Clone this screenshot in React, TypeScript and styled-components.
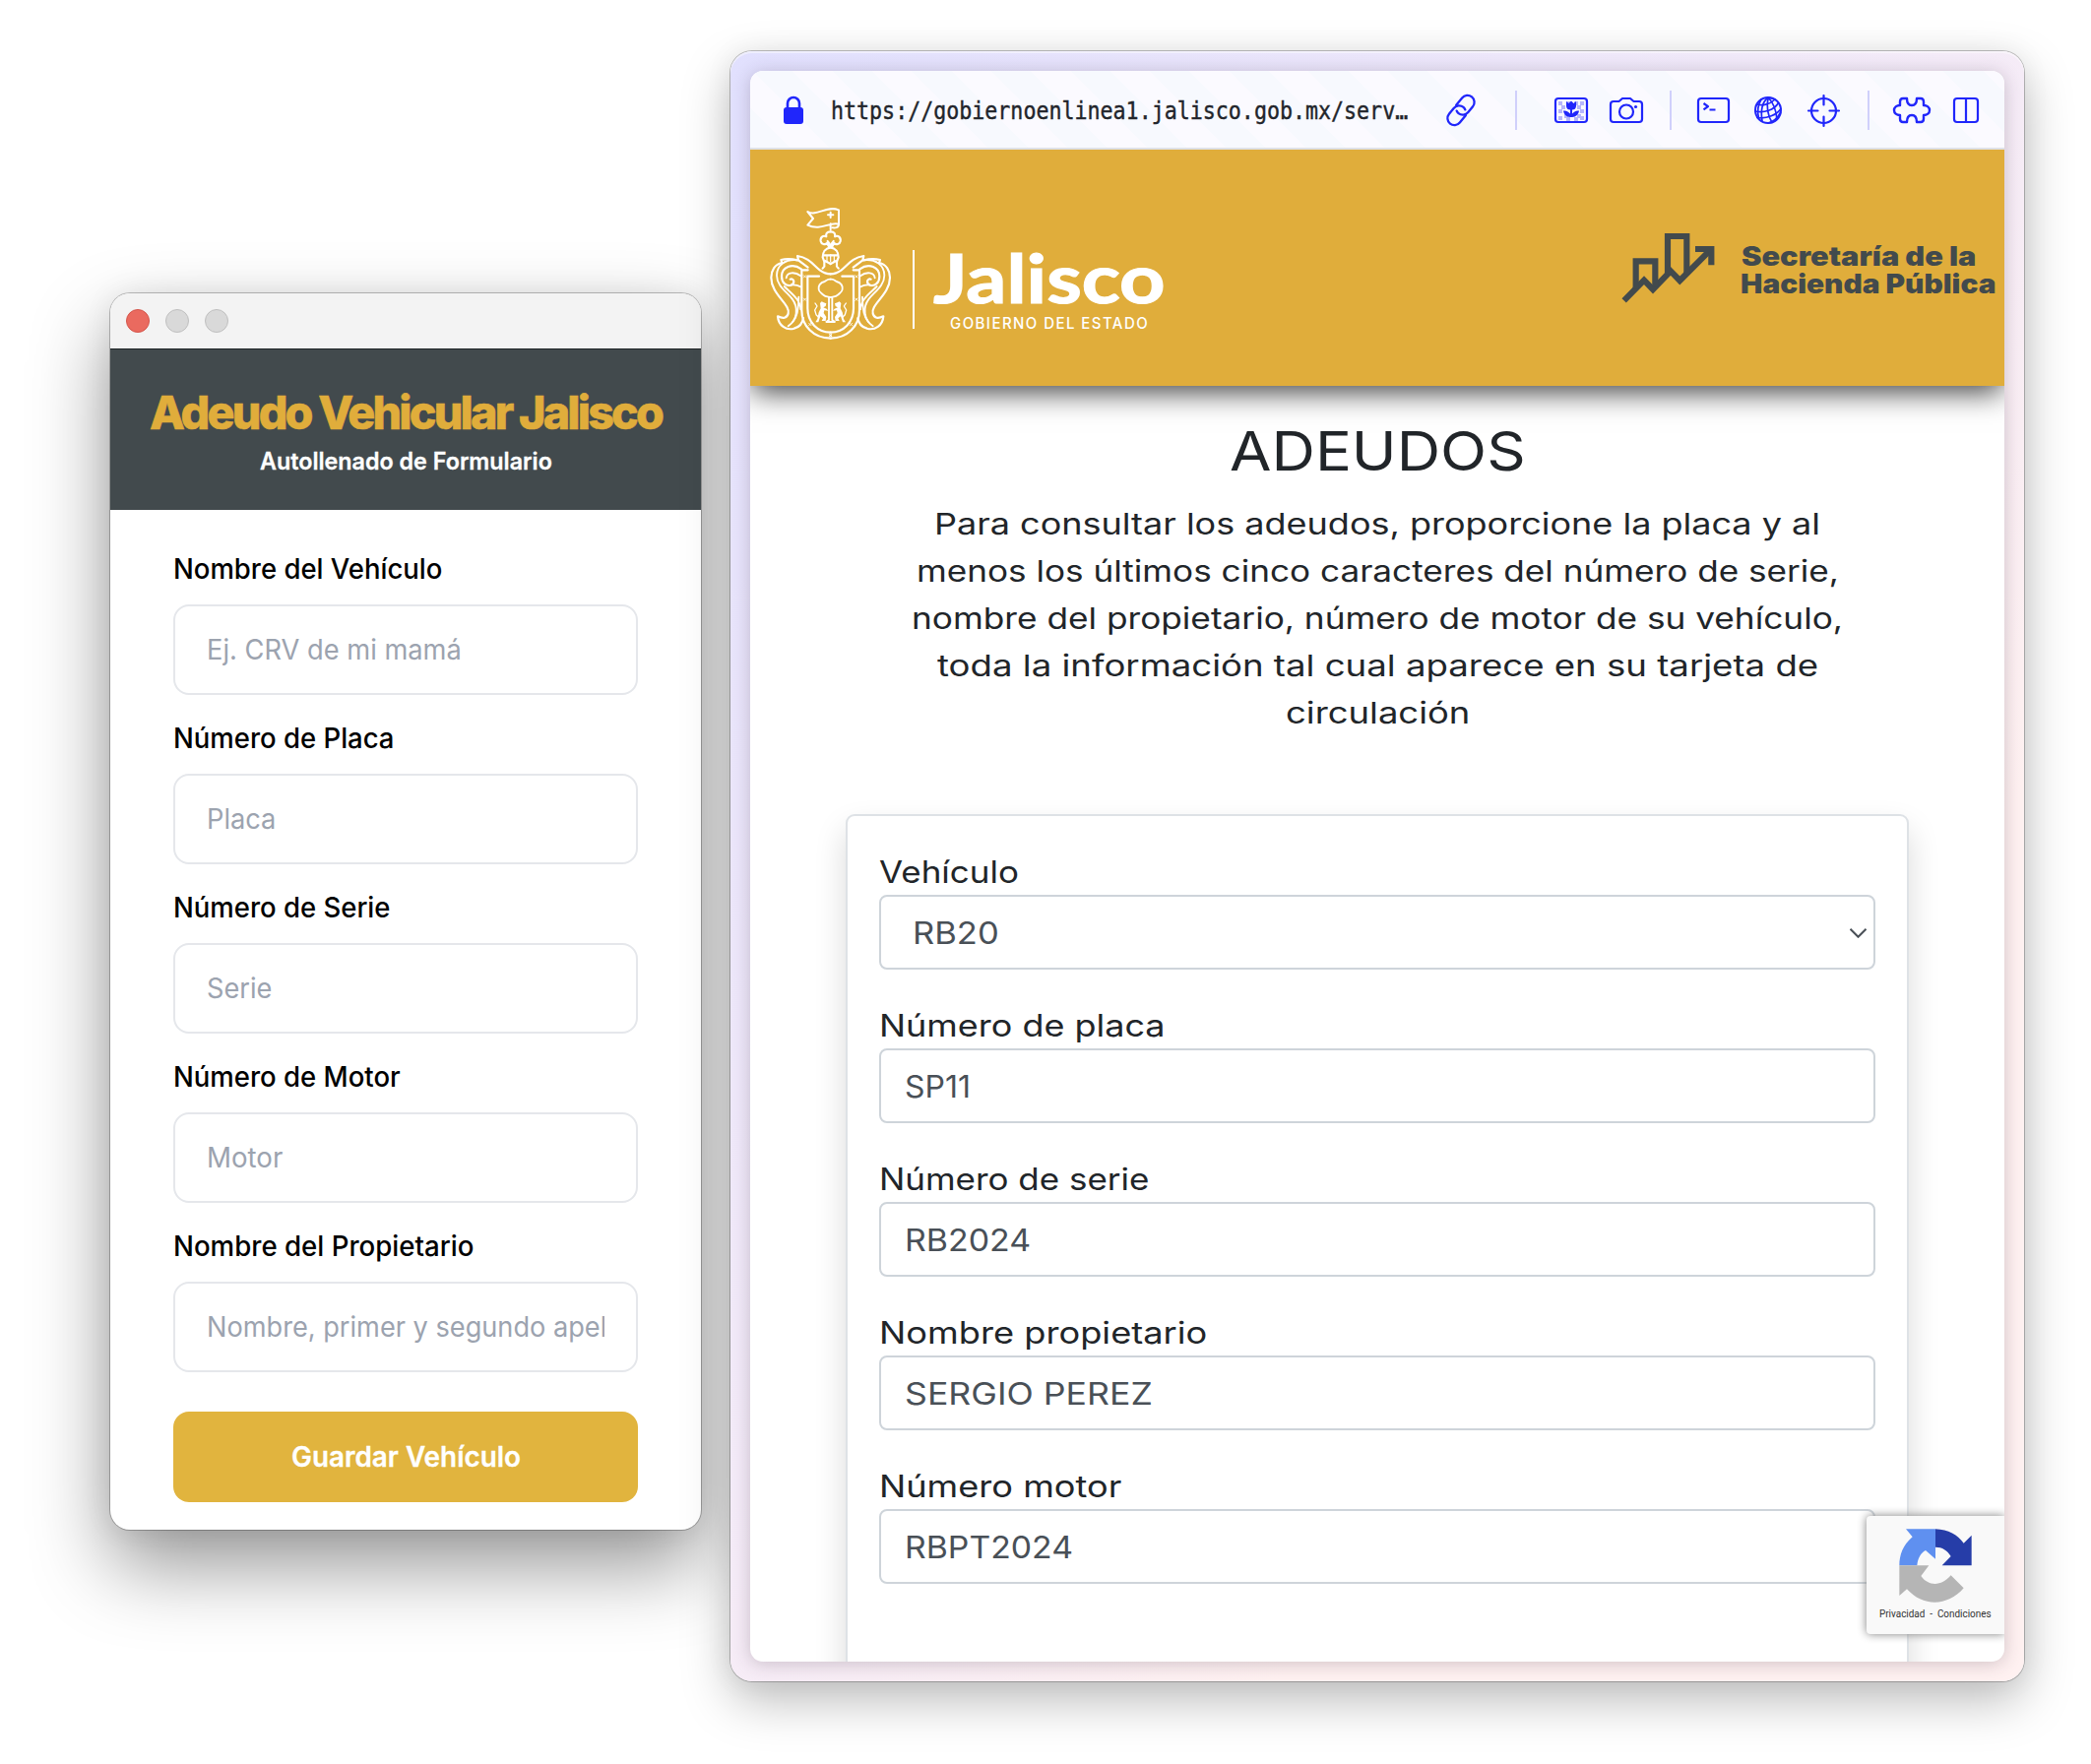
import React, { useLayoutEffect, useRef, useState } from 'react';
import styled, { createGlobalStyle } from 'styled-components';

const GlobalStyle = createGlobalStyle`
  * { box-sizing: border-box; }
  body { margin: 0; background: #fff; }
`;

const sans = `Inter, "Liberation Sans", sans-serif`;
const gold = '#e0ad3b';
const slate = '#424a4d';
const blue = '#2026fb';

/* ---------- text stretched to a given width ---------- */

const FitBox = styled.span<{ $w: number; $shift: number }>`
  display: inline-block;
  width: ${(p) => p.$w}px;
  margin-left: ${(p) => p.$shift}px;
  white-space: nowrap;
  text-align: left;
  vertical-align: top;
`;

const FitInner = styled.span`
  display: inline-block;
  transform-origin: 0 50%;
  vertical-align: top;
`;

function Fit({ w, shift = 0, children }: { w: number; shift?: number; children: string }) {
  const ref = useRef<HTMLSpanElement>(null);
  const [scale, setScale] = useState(1);
  useLayoutEffect(() => {
    if (ref.current) setScale(w / ref.current.offsetWidth);
  }, [w, children]);
  return (
    <FitBox $w={w} $shift={shift}>
      <FitInner ref={ref} style={{ transform: `scaleX(${scale})` }}>
        {children}
      </FitInner>
    </FitBox>
  );
}

/* ---------- desktop and windows ---------- */

const Desktop = styled.main`
  position: relative;
  width: 2124px;
  height: 1792px;
  overflow: hidden;
  background: #fff;
  font-family: ${sans};
`;

const AppWindow = styled.section`
  position: absolute;
  left: 112px;
  top: 298px;
  width: 600px;
  height: 1256px;
  display: flex;
  flex-direction: column;
  border-radius: 20px;
  background: #fff;
  overflow: hidden;
  box-shadow: 0 0 0 1px rgba(0, 0, 0, 0.24), 0 36px 80px rgba(0, 0, 0, 0.42), 0 0 30px rgba(0, 0, 0, 0.07);
`;

const TitleBar = styled.div`
  height: 56px;
  flex: none;
  display: flex;
  align-items: center;
  gap: 16px;
  padding-left: 16px;
  background: #f3f3f3;
`;

const Light = styled.span<{ $on?: boolean }>`
  width: 24px;
  height: 24px;
  border-radius: 50%;
  background: ${(p) => (p.$on ? '#ea6a5f' : '#d9d9d9')};
  border: 1px solid ${(p) => (p.$on ? '#d4564b' : '#bfbfbf')};
`;

const AppHeader = styled.header`
  height: 164px;
  flex: none;
  display: flex;
  flex-direction: column;
  align-items: center;
  padding-top: 40px;
  gap: 10px;
  background: ${slate};
  border-top: 1px solid #1f2426;
`;

const AppTitle = styled.h1`
  margin: 0;
  font-size: 47px;
  line-height: 48px;
  font-weight: 800;
  letter-spacing: -2.8px;
  color: ${gold};
  -webkit-text-stroke: 0.6px ${gold};
`;

const AppSubtitle = styled.p`
  margin: 0;
  font-size: 24px;
  line-height: 32px;
  font-weight: 600;
  color: #fff;
  -webkit-text-stroke: 0.3px #fff;
`;

const AppForm = styled.form`
  display: flex;
  flex-direction: column;
  gap: 28px;
  padding: 44px 64px 0;
`;

const AppField = styled.div`
  display: flex;
  flex-direction: column;
  gap: 20px;
`;

const AppLabel = styled.label`
  font-size: 28px;
  line-height: 32px;
  font-weight: 500;
  color: #000;
`;

const AppInput = styled.div`
  height: 92px;
  border: 2px solid #e5e7eb;
  border-radius: 16px;
  padding: 0 32px;
  font-size: 28px;
  line-height: 88px;
  color: #9ca3af;
`;

const Clip = styled.div`
  overflow: hidden;
  height: 88px;
`;

const SaveButton = styled.button`
  height: 92px;
  margin-top: 12px;
  border: 0;
  padding: 0;
  border-radius: 16px;
  background: #e1b43e;
  color: #fff;
  font: 600 28px/92px ${sans};
  -webkit-text-stroke: 0.3px #fff;
`;

const BrowserWindow = styled.section`
  position: absolute;
  left: 742px;
  top: 52px;
  width: 1314px;
  height: 1656px;
  padding: 20px;
  border-radius: 22px;
  background: linear-gradient(130deg, #e1e0fe 0%, #f4ebf8 46%, #fff1f1 72%);
  box-shadow: 0 0 0 1px rgba(0, 0, 0, 0.24), inset 0 2px 0 rgba(255, 255, 255, 0.45),
    0 20px 50px rgba(0, 0, 0, 0.26), 0 0 30px rgba(0, 0, 0, 0.06);
`;

const Viewport = styled.div`
  position: relative;
  height: 1616px;
  display: flex;
  flex-direction: column;
  border-radius: 13px;
  background: #fff;
  box-shadow: 0 2px 18px rgba(60, 40, 60, 0.24);
`;

const Page = styled.div`
  flex: 1;
  min-height: 0;
  display: flex;
  flex-direction: column;
  align-items: center;
  overflow: hidden;
  border-radius: 0 0 13px 13px;
`;

/* ---------- browser toolbar ---------- */

const Toolbar = styled.div`
  height: 80px;
  flex: none;
  display: flex;
  align-items: center;
  border-bottom: 2px solid #dfe1e6;
  border-radius: 13px 13px 0 0;
  padding: 2px 0 0 33px;
  background: repeating-linear-gradient(45deg, #f7f9fe 0 28.5px, #fbfaff 28.5px 57px);
`;

const Url = styled.div`
  margin: 0 39px 0 28px;
  padding-top: 2px;
  font: 24px/40px "DejaVu Sans Mono", "Liberation Mono", monospace;
  color: #22252b;
  -webkit-text-stroke: 0.4px #22252b;
`;

const Divider = styled.i<{ $l: number; $r: number }>`
  width: 2px;
  height: 40px;
  flex: none;
  margin: 0 ${(p) => p.$r}px 0 ${(p) => p.$l}px;
  background: #d0d0fb;
`;

const IconSvg = styled.svg<{ $l?: number }>`
  flex: none;
  margin-left: ${(p) => p.$l ?? 0}px;
  overflow: visible;
  fill: none;
  stroke: ${blue};
  stroke-width: 2.2;
  stroke-linecap: round;
  stroke-linejoin: round;
`;

function ToolIcon({ w, h, l, children }: { w: number; h: number; l?: number; children: React.ReactNode }) {
  return (
    <IconSvg width={w} height={h} viewBox={`0 0 ${w} ${h}`} $l={l}>
      {children}
    </IconSvg>
  );
}

const checks: [number, number][] = [
  [4, 4], [12, 4], [20, 4], [26, 4], [4, 12], [26, 12], [4, 19], [10, 17], [23, 17], [12, 20], [20, 20], [26, 19], [7, 8], [23, 8],
];

function BrowserToolbar() {
  return (
    <Toolbar>
      <ToolIcon w={20} h={28} l={1}>
        <rect x="0" y="11" width="20" height="17" rx="3" fill={blue} stroke="none" />
        <path d="M4 12V7a6 6 0 0 1 12 0v5" strokeWidth="2.6" />
      </ToolIcon>
      <Url>
        <Fit w={586}>https://gobiernoenlinea1.jalisco.gob.mx/serv…</Fit>
      </Url>
      <ToolIcon w={30} h={30}>
        <g transform="rotate(-51 15 15)" strokeWidth="2.3">
          <path d="M14 22H4.500a7 7 0 0 1 0-14H12a7 7 0 0 1 7 7c0 1-.3 2-.8 3" />
          <path d="M16 8h9.500a7 7 0 0 1 0 14H18a7 7 0 0 1-7-7c0-1 .3-2 .8-3" />
        </g>
      </ToolIcon>
      <Divider $l={40} $r={38} />
      <ToolIcon w={34} h={26}>
        {checks.map(([x, y]) => (
          <rect key={`${x}-${y}`} x={x} y={y} width="4" height="4" fill="#b6b6fb" stroke="none" />
        ))}
        <rect x="1" y="1" width="32" height="24" rx="3" />
        <path
          d="M12 4l2.500 2L17 3.500l2.500 2.500L22 4v5a4 4 0 0 1-4 3.500v4c1.500-2 4-3.500 7-3-.5 3.500-3 6.300-7 6.600h-2c-4-.3-6.500-3.100-7-6.600 3-.5 5.500 1 7 3v-4a4 4 0 0 1-4-3.500z"
          fill={blue}
          stroke="none"
        />
      </ToolIcon>
      <ToolIcon w={34} h={26} l={22}>
        <path d="M4 4h5.500L13 1h8l3.500 3H30a3 3 0 0 1 3 3v15a3 3 0 0 1-3 3H4a3 3 0 0 1-3-3V7a3 3 0 0 1 3-3z" />
        <circle cx="17" cy="14.500" r="7" />
        <circle cx="26.500" cy="9.500" r="1.600" fill={blue} stroke="none" />
      </ToolIcon>
      <Divider $l={27} $r={26} />
      <ToolIcon w={33} h={26}>
        <rect x="1" y="1" width="31" height="24" rx="3" />
        <path d="M6.500 6l4.500 3.200-4.500 3.200M12.500 12.500h6" strokeLinecap="butt" />
      </ToolIcon>
      <ToolIcon w={28} h={28} l={25}>
        <g strokeWidth="1.700">
          <circle cx="14" cy="14" r="13" strokeWidth="2" />
          <path d="M2.500 8c5 1.500 13 .5 18.500-5M1 15c9 2 19-1 23.500-8.500M3 21.500c10 1.500 20-3 24-9M14 27c5-1 9.500-5 12.500-10.500" />
          <path d="M14 1c-5 4-8 12-6 24M14 1c-1.500 8-.5 18 4 25.500M14 1c4 4 8 11 9 22M7 3c-3 5-4.500 11-2.500 19M14 1l4 1" />
        </g>
      </ToolIcon>
      <ToolIcon w={33} h={33} l={26}>
        <circle cx="16.500" cy="16.500" r="12.500" />
        <path d="M16.500 1v9.500M16.500 22.500v9.500M1 16.500h9.500M22.500 16.500h9.500" />
      </ToolIcon>
      <Divider $l={28} $r={24} />
      <ToolIcon w={38} h={26}>
        <path
          d="M10 1h4c0 5 1.500 7 5 7s5-2 5-7h4c2 0 3 1.500 3 3.500V8c3.500 0 6 2 6 5s-2.500 5-6 5v3.500c0 2-1 3.500-3 3.500h-4c0-5-1.500-7-5-7s-5 2-5 7h-4c-2 0-3-1.500-3-3.500V18c-3.500 0-6-2-6-5s2.500-5 6-5V4.500C7 2.500 8 1 10 1z"
          strokeWidth="2.400"
        />
      </ToolIcon>
      <ToolIcon w={26} h={26} l={23}>
        <rect x="1" y="1" width="24" height="24" rx="3" />
        <path d="M13 1v24" />
      </ToolIcon>
    </Toolbar>
  );
}

/* ---------- government header ---------- */

const Banner = styled.header`
  position: relative;
  z-index: 1;
  width: 100%;
  height: 240px;
  flex: none;
  display: flex;
  align-items: flex-start;
  background: ${gold};
  box-shadow: 0 8px 28px -2px rgba(0, 0, 0, 0.76);
`;

const CrestSvg = styled.svg`
  flex: none;
  margin: 53px 0 0 16px;
  fill: none;
  stroke: #fff;
  stroke-width: 6.5;
  stroke-linecap: round;
  stroke-linejoin: round;
`;

const BrandRule = styled.i`
  flex: none;
  width: 2px;
  height: 80px;
  margin: 102px 0 0 19px;
  background: #fff;
`;

const Brand = styled.div`
  display: flex;
  flex-direction: column;
  align-items: center;
  width: 234px;
  margin: 88px 0 0 20px;
  color: #fff;
`;

const BrandName = styled.div`
  font: 700 69px/84px Lato, sans-serif;
  height: 84px;
  -webkit-text-stroke: 1.2px #fff;
`;

const BrandSub = styled.div`
  margin-top: -6px;
  font: 500 15.500px/22px ${sans};
  letter-spacing: 1.5px;
`;

const Ministry = styled.div`
  display: flex;
  align-items: flex-start;
  gap: 26px;
  margin: 84px 0 0 auto;
  padding-right: 9px;
  color: ${slate};
`;

const MinistryName = styled.div`
  display: flex;
  flex-direction: column;
  width: 258px;
  padding-top: 10px;
  font: 900 26.500px/28px ${sans};
`;

function CrestHalf() {
  return (
    <g>
      <path d="M197 220c-14 0-22-4-33-12-18-13-32-38-68-43l3 13 29 22" />
      <path d="M96 178c-16-4-34-5-50-1l3 9c-22 4-33 24-33 45 0 52 60 82 52 110-4 14-16 16-32 8 2 28 26 44 50 37 20-5 26-18 28-32" />
      <path d="M99 178c-40-6-66 16-66 46 0 32 30 50 47 72 20 26 16 64-12 83" strokeWidth="5.500" />
      <path d="M108 205c-28-20-60-6-60 22 0 20 14 31 28 27 14-5 10-22-2-18" />
      <path d="M106 226c-18-14-42-12-44 6M76 254c10-2 20 0 32 6M56 258c20 20 50 40 50 70M100 290c0 30-4 60-18 76" strokeWidth="5.500" />
      <path d="M128 208h-19v122c0 48 36 86 88 86" />
      <path d="M162 227h-35v98c0 42 30 73 70 73" />
      <path d="M115 224l7 7M122 224l-7 7M115 294l7 7M122 294l-7 7M131 370l7 7M138 370l-7 7" strokeWidth="2.500" />
      <path d="M197 91c-12 0-15 8-13 15-10-5-19 2-17 14 2 10 14 12 19 6M197 138c-1-8-3-13-9-18M186 126l7 12" />
      <path d="M197 139c-14 2-24 13-24 30l5 14v14l-5 6M176 163h21M180 180l17 9" />
      <path d="M197 236c-9-1-13 4-18 7-14 3-20 14-18 24 1 9 9 11 14 17 6 7 16 5 22 7M192 292v68l-8 6h13" strokeWidth="5.500" />
      <path
        d="M165 309l5-5 6 3 8 3-2 8-7 4 10 4 5 6-12-1-2 8 8 12-2 12h-12l4-8-8-6-4 12-2 6h-9l6-10 4-20 6-12z"
        fill="#fff"
        stroke="none"
      />
      <path d="M150 309l6 9-7 12 4 14 7 7" strokeWidth="4" />
    </g>
  );
}

function Crest() {
  return (
    <CrestSvg width="130" height="145" viewBox="0 0 390 435">
      <path d="M127 30c28 16 58-20 95-5v43c-28-8-55 22-95 3l17-20zM222 68c0 12-12 12-19 11M197 67v18" strokeWidth="6" />
      <path d="M197 32v16M189 40h16" strokeWidth="6" />
      <CrestHalf />
      <g transform="translate(394 0) scale(-1 1)">
        <CrestHalf />
      </g>
      <path d="M186 166v17M208 166v17M197 166v17M194 404l6 6M200 404l-6 6" strokeWidth="3.500" />
    </CrestSvg>
  );
}

const ChartSvg = styled.svg`
  flex: none;
  fill: none;
  stroke: ${slate};
  stroke-width: 18.5;
`;

function GrowthMark() {
  return (
    <ChartSvg width="96" height="72" viewBox="80 78 288 216">
      <path d="M88 286L149 224L176 252L230 196L258 225L352 131" />
      <path d="M124 250V166H183V245M221 205V90H279V205" />
      <path d="M305 129H354V178" />
    </ChartSvg>
  );
}

/* ---------- government page ---------- */

const PageTitle = styled.h2`
  margin: 36px 0 20px;
  font-size: 55px;
  line-height: 60px;
  font-weight: 400;
  color: #212529;
`;

const Intro = styled.p`
  display: flex;
  flex-direction: column;
  align-items: center;
  margin: 0 0 79px;
  font-size: 30px;
  line-height: 48px;
  color: #212529;
`;

const Card = styled.div`
  width: 1080px;
  height: 900px;
  flex: none;
  display: flex;
  flex-direction: column;
  gap: 32px;
  padding: 32px;
  border: 2px solid #dee2e6;
  border-radius: 9px;
  background: #fff;
  box-shadow: 0 16px 32px rgba(0, 0, 0, 0.15);
`;

const GovField = styled.div`
  display: flex;
  flex-direction: column;
`;

const GovLabel = styled.label`
  height: 48px;
  padding-top: 1px;
  font-size: 31px;
  line-height: 48px;
  color: #212529;
`;

const GovInput = styled.div<{ $select?: boolean }>`
  display: flex;
  align-items: center;
  justify-content: space-between;
  height: 76px;
  padding: 2px 7px 0 ${(p) => (p.$select ? 32 : 24)}px;
  border: 2px solid #ced4da;
  border-radius: 8px;
  font-size: 31px;
  line-height: 70px;
  color: #495057;
`;

const Captcha = styled.aside`
  position: absolute;
  right: 0;
  bottom: 28px;
  width: 140px;
  height: 120px;
  display: flex;
  flex-direction: column;
  align-items: center;
  padding-top: 13px;
  border-radius: 4px 0 0 4px;
  background: #f9f9f9;
  box-shadow: 0 0 10px #808080;
  clip-path: inset(-20px 0 -20px -20px);
  font: 10px/14px Roboto, sans-serif;
  color: #333;
`;

const CaptchaText = styled.div`
  margin-top: 5px;
  white-space: pre;
`;

const intro: [string, number][] = [
  ['Para consultar los adeudos, proporcione la placa y al', 900],
  ['menos los últimos cinco caracteres del número de serie,', 937],
  ['nombre del propietario, número de motor de su vehículo,', 946],
  ['toda la información tal cual aparece en su tarjeta de', 895],
  ['circulación', 187],
];

const govFields = [
  { label: 'Vehículo', lw: 142, value: 'RB20', vw: 88, select: true },
  { label: 'Número de placa', lw: 290, value: 'SP11', vw: 67 },
  { label: 'Número de serie', lw: 274, value: 'RB2024', vw: 128 },
  { label: 'Nombre propietario', lw: 333, value: 'SERGIO PEREZ', vw: 252 },
  { label: 'Número motor', lw: 246, value: 'RBPT2024', vw: 171 },
];

const appFields = [
  { label: 'Nombre del Vehículo', lw: 273, hint: 'Ej. CRV de mi mamá', hw: 259 },
  { label: 'Número de Placa', lw: 224, hint: 'Placa', hw: 70 },
  { label: 'Número de Serie', lw: 220, hint: 'Serie', hw: 66 },
  { label: 'Número de Motor', lw: 231, hint: 'Motor', hw: 77 },
  { label: 'Nombre del Propietario', lw: 305, hint: 'Nombre, primer y segundo apellido', hw: 452 },
];

export default function App() {
  return (
    <>
      <GlobalStyle />
      <Desktop>
        <AppWindow>
          <TitleBar>
            <Light $on />
            <Light />
            <Light />
          </TitleBar>
          <AppHeader>
            <AppTitle>
              <Fit w={520}>Adeudo Vehicular Jalisco</Fit>
            </AppTitle>
            <AppSubtitle>
              <Fit w={297}>Autollenado de Formulario</Fit>
            </AppSubtitle>
          </AppHeader>
          <AppForm>
            {appFields.map((f) => (
              <AppField key={f.label}>
                <AppLabel>
                  <Fit w={f.lw}>{f.label}</Fit>
                </AppLabel>
                <AppInput>
                  <Clip>
                    <Fit w={f.hw}>{f.hint}</Fit>
                  </Clip>
                </AppInput>
              </AppField>
            ))}
            <SaveButton type="button">
              <Fit w={233} shift={1}>Guardar Vehículo</Fit>
            </SaveButton>
          </AppForm>
        </AppWindow>

        <BrowserWindow>
          <Viewport>
            <BrowserToolbar />
            <Page>
              <Banner>
                <Crest />
                <BrandRule />
                <Brand>
                  <BrandName>
                    <Fit w={236}>Jalisco</Fit>
                  </BrandName>
                  <BrandSub>
                    <Fit w={202}>GOBIERNO DEL ESTADO</Fit>
                  </BrandSub>
                </Brand>
                <Ministry>
                  <GrowthMark />
                  <MinistryName>
                    <Fit w={239}>Secretaría de la</Fit>
                    <Fit w={259} shift={-1}>Hacienda Pública</Fit>
                  </MinistryName>
                </Ministry>
              </Banner>
              <PageTitle>
                <Fit w={301}>ADEUDOS</Fit>
              </PageTitle>
              <Intro>
                {intro.map(([text, w]) => (
                  <Fit key={text} w={w}>{text}</Fit>
                ))}
              </Intro>
              <Card>
                {govFields.map((f) => (
                  <GovField key={f.label}>
                    <GovLabel>
                      <Fit w={f.lw}>{f.label}</Fit>
                    </GovLabel>
                    <GovInput $select={f.select}>
                      <Fit w={f.vw}>{f.value}</Fit>
                      {f.select && (
                        <svg width="17" height="10" viewBox="0 0 17 10" fill="none" stroke="#495057" strokeWidth="2">
                          <path d="M.5 .8l8 8 8-8" />
                        </svg>
                      )}
                    </GovInput>
                  </GovField>
                ))}
              </Card>
            </Page>
            <Captcha>
              <svg width="74" height="75" viewBox="0 0 222 225">
                <path d="M111 1C150 2 180 20 197 44L221 20V112H131L158 84C147 66 132 56 111 56z" fill="#263da8" />
                <path d="M111 1H21L41 25C12 50 1 80 1 112H55C57 90 66 74 81 66L111 92z" fill="#5f90f0" />
                <path d="M1 112H91L67 144C88 174 128 178 158 142L197 181C148 238 72 238 24 184L1 204z" fill="#b5b5b5" />
              </svg>
              <CaptchaText>
                <Fit w={114}>{'Privacidad \u00a0-\u00a0 Condiciones'}</Fit>
              </CaptchaText>
            </Captcha>
          </Viewport>
        </BrowserWindow>
      </Desktop>
    </>
  );
}
